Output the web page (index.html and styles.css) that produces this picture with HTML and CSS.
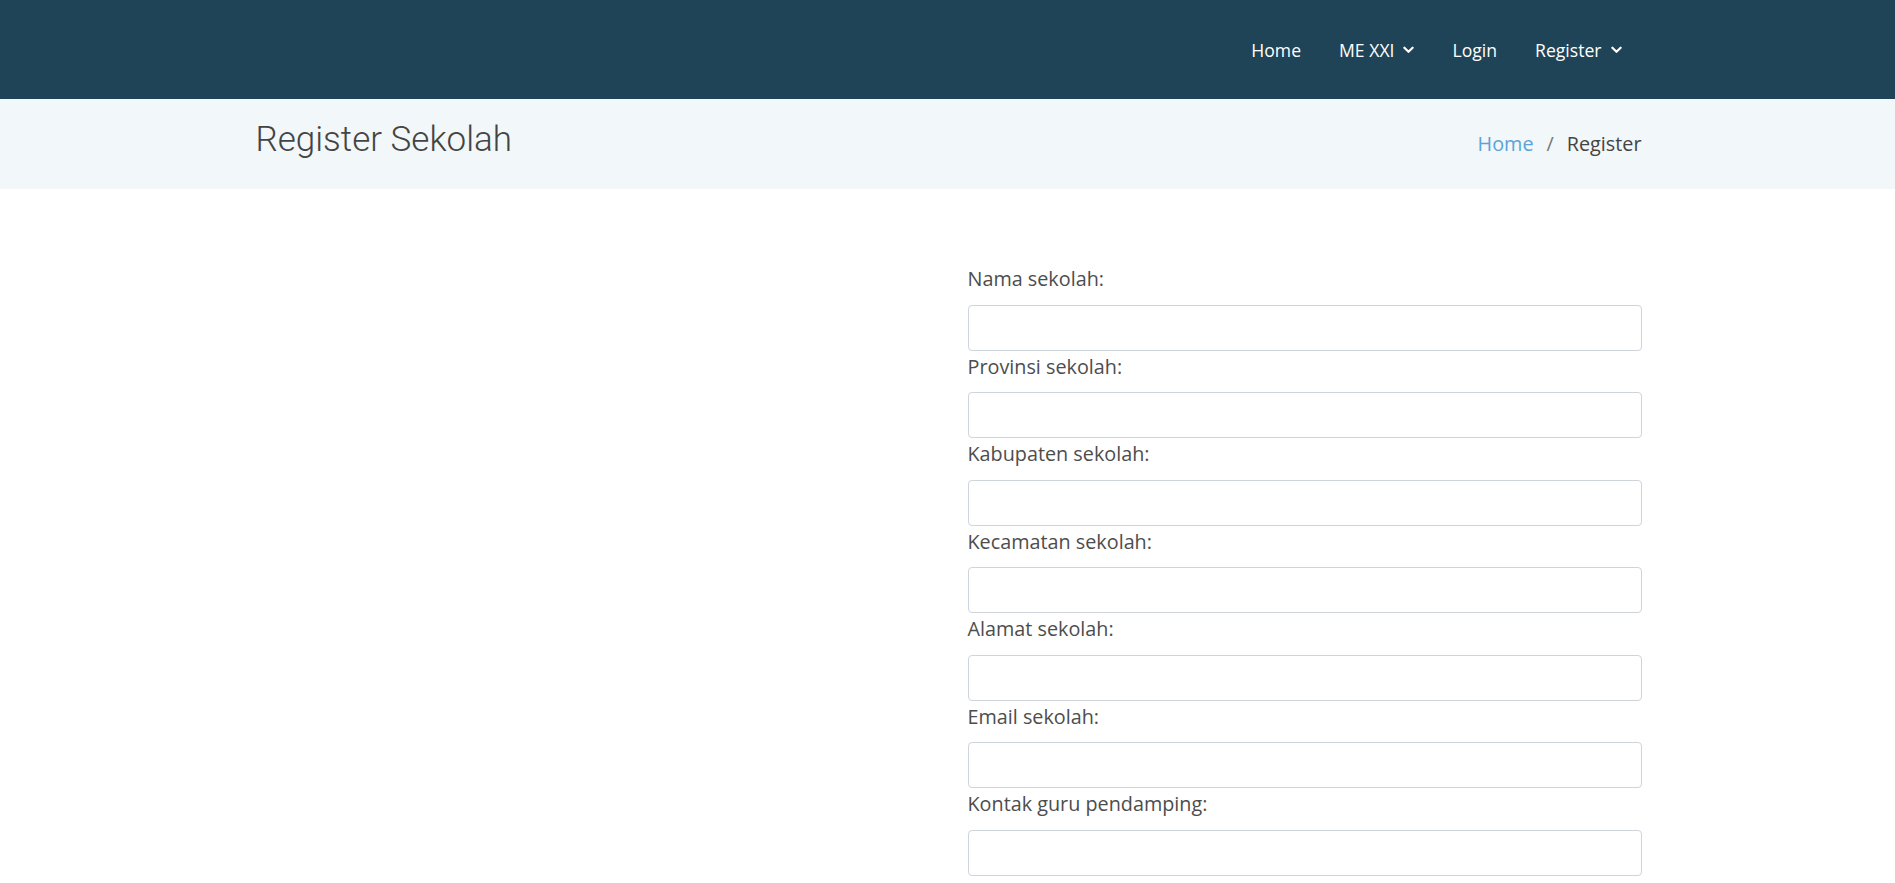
FILE: index.html
```html
<!DOCTYPE html>
<html lang="id">
<head>
<meta charset="utf-8">
<title>Register Sekolah</title>
<link rel="stylesheet" href="styles.css">
</head>
<body>
<header class="topbar">
  <div class="container topbar-inner">
    <nav class="mainnav">
      <a class="nav-item" href="#">Home</a>
      <a class="nav-item" href="#">ME XXI <svg class="chev" viewBox="0 0 12 8" width="11" height="8"><path d="M1.5 1.5 L6 6 L10.5 1.5" fill="none" stroke="currentColor" stroke-width="2.4" stroke-linecap="round" stroke-linejoin="round"/></svg></a>
      <a class="nav-item" href="#">Login</a>
      <a class="nav-item" href="#">Register <svg class="chev" viewBox="0 0 12 8" width="11" height="8"><path d="M1.5 1.5 L6 6 L10.5 1.5" fill="none" stroke="currentColor" stroke-width="2.4" stroke-linecap="round" stroke-linejoin="round"/></svg></a>
    </nav>
  </div>
</header>

<section class="pagehead">
  <div class="container pagehead-inner">
    <h1 class="page-title">Register Sekolah</h1>
    <ol class="crumbs">
      <li><a href="#">Home</a></li>
      <li class="sep">/</li>
      <li class="current">Register</li>
    </ol>
  </div>
</section>

<main class="container content">
  <div class="col-left"></div>
  <form class="regform">
    <div class="field"><label>Nama sekolah:</label><input type="text"></div>
    <div class="field"><label>Provinsi sekolah:</label><input type="text"></div>
    <div class="field"><label>Kabupaten sekolah:</label><input type="text"></div>
    <div class="field"><label>Kecamatan sekolah:</label><input type="text"></div>
    <div class="field"><label>Alamat sekolah:</label><input type="text"></div>
    <div class="field"><label>Email sekolah:</label><input type="email"></div>
    <div class="field"><label>Kontak guru pendamping:</label><input type="text"></div>
  </form>
</main>
</body>
</html>
```

FILE: styles.css
```css
* { box-sizing: border-box; }
html, body { margin: 0; padding: 0; }
body {
  font-family: "Open Sans", "Liberation Sans", sans-serif;
  color: #4a4a4a;
  background: #ffffff;
}
.container {
  width: 1388px;
  margin: 0 auto;
}

.topbar {
  background: #1f4457;
  height: 99px;
}
.topbar-inner {
  height: 100%;
  display: flex;
  justify-content: flex-end;
  align-items: center;
}
.mainnav {
  display: flex;
  align-items: center;
}
.nav-item {
  display: flex;
  align-items: center;
  gap: 9px;
  padding: 0 19px;
  color: #ffffff;
  text-decoration: none;
  font-size: 17.6px;
  line-height: 24px;
}
.nav-item:last-child { padding-right: 20px; }
.chev { display: block; margin-top: 1px; }

.pagehead {
  background: #f2f7f9;
  height: 90px;
}
.pagehead-inner {
  height: 100%;
  display: flex;
  justify-content: space-between;
  align-items: center;
}
.page-title {
  margin: -9px 0 0 2px;
  font-family: Roboto, "Liberation Sans", sans-serif;
  font-weight: 300;
  font-size: 35px;
  line-height: 44px;
  color: #444444;
}
.crumbs {
  list-style: none;
  margin: 0;
  padding: 0;
  display: flex;
  align-items: center;
  gap: 13px;
  font-size: 19.8px;
  line-height: 28px;
}
.crumbs a { color: #5ba3d8; text-decoration: none; }
.crumbs .sep { color: #777777; }
.crumbs .current { color: #444444; }

.content {
  display: grid;
  grid-template-columns: 1fr 1fr;
  column-gap: 40px;
  padding-top: 76px;
}
.regform {
  display: flex;
  flex-direction: column;
}
.field {
  display: flex;
  flex-direction: column;
  margin-bottom: 2px;
}
.field label {
  font-size: 19.8px;
  line-height: 28px;
  color: #4d4d4d;
  margin-bottom: 11.5px;
}
.field input {
  height: 46px;
  border: 1px solid #ced4da;
  border-radius: 4px;
  background: #ffffff;
  font: inherit;
  padding: 6px 12px;
}
```
